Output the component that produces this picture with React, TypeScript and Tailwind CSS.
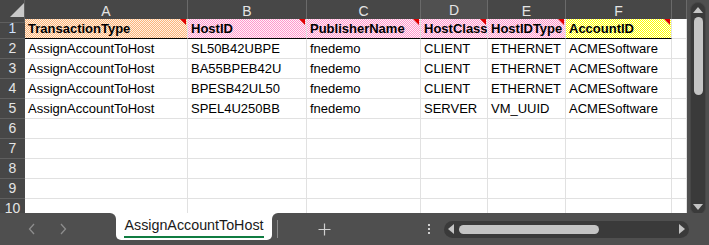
import React from 'react';

type Fill = 'orange' | 'pink' | 'yellow';

const columns = ['A', 'B', 'C', 'D', 'E', 'F', ''];

const headers: { label: string; fill: Fill }[] = [
  { label: 'TransactionType', fill: 'orange' },
  { label: 'HostID', fill: 'pink' },
  { label: 'PublisherName', fill: 'pink' },
  { label: 'HostClass', fill: 'pink' },
  { label: 'HostIDType', fill: 'pink' },
  { label: 'AccountID', fill: 'yellow' },
];

const rows: string[][] = [
  ['AssignAccountToHost', 'SL50B42UBPE', 'fnedemo', 'CLIENT', 'ETHERNET', 'ACMESoftware'],
  ['AssignAccountToHost', 'BA55BPEB42U', 'fnedemo', 'CLIENT', 'ETHERNET', 'ACMESoftware'],
  ['AssignAccountToHost', 'BPESB42UL50', 'fnedemo', 'CLIENT', 'ETHERNET', 'ACMESoftware'],
  ['AssignAccountToHost', 'SPEL4U250BB', 'fnedemo', 'SERVER', 'VM_UUID', 'ACMESoftware'],
];

// checkered header fills (Excel pattern fill), 2px tiles
const fillClass: Record<Fill, string> = {
  orange: 'bg-[#fdd3ae] bg-[conic-gradient(#fcb57a_25%,#fff0e2_0_50%,#fcb57a_0_75%,#fff0e2_0)] bg-size-[2px_2px]',
  pink: 'bg-[#ffc6e2] bg-[conic-gradient(#ff99cc_25%,#fff0f7_0_50%,#ff99cc_0_75%,#fff0f7_0)] bg-size-[2px_2px]',
  yellow: 'bg-[#ffff80] bg-[conic-gradient(#ffff00_25%,#fffff4_0_50%,#ffff00_0_75%,#fffff4_0)] bg-size-[2px_2px]',
};

const gridCols = 'grid grid-cols-[25px_163px_119px_114px_67px_78px_106px_15px]';

const RowNumber: React.FC<{ n: number; active?: boolean }> = ({ n, active }) => (
  <div
    className={`h-5 flex items-center justify-center border-b border-[#5f5f5f] bg-[#474747] text-[14px] ${
      active ? 'text-[#cfe3ff]' : 'text-[#e4e4e4]'
    }`}
  >
    {n}
  </div>
);

const Cell: React.FC<{ children?: React.ReactNode }> = ({ children }) => (
  <div className="h-5 flex items-center pl-[3px] border-r border-b border-[#e1e1e1] bg-white text-[13px] text-black whitespace-nowrap overflow-hidden">
    {children}
  </div>
);

const App: React.FC = () => {
  return (
    <div className="w-[709px] h-[245px] flex flex-col bg-[#4f4f4f] overflow-hidden font-['Liberation_Sans',Arial,sans-serif]">
      {/* sheet + vertical scrollbar */}
      <div className="h-[213px] flex">
        <div className="w-[687px] h-[213px] overflow-hidden bg-white">
          {/* column letters */}
          <div className={`${gridCols} h-[19px] bg-[#474747]`}>
            <div className="relative border-r border-b border-[#5f5f5f]">
              <div className="absolute left-[10px] top-[3px] w-[14px] h-[14px] bg-[#c8c8c8] [clip-path:polygon(100%_0,100%_100%,0_100%)]" />
            </div>
            {columns.map((c, i) => (
              <div
                key={i}
                className={`flex items-center justify-center text-[14px] text-[#e4e4e4] border-r border-[#6a6a6a] ${
                  c === 'D' ? 'border-b-2 border-b-[#21a366] bg-[#505050]' : 'border-b border-b-[#5f5f5f]'
                }`}
              >
                {c}
              </div>
            ))}
          </div>

          {/* header row */}
          <div className={gridCols}>
            <RowNumber n={1} active />
            {headers.map((h) => (
              <div
                key={h.label}
                className={`relative h-5 flex items-center pl-[3px] border-r border-[#e1e1e1] border-b border-b-black whitespace-nowrap overflow-hidden ${fillClass[h.fill]}`}
              >
                <span className="relative text-[13px] font-bold text-[#000000]">{h.label}</span>
                <div className="absolute right-[1px] top-0 w-0 h-0 border-t-[6px] border-l-[6px] border-t-[#e00000] border-l-transparent" />
              </div>
            ))}
            <Cell />
          </div>

          {/* data rows */}
          {rows.map((r, i) => (
            <div key={i} className={gridCols}>
              <RowNumber n={i + 2} />
              {r.map((v, j) => (
                <Cell key={j}>{v}</Cell>
              ))}
              <Cell />
            </div>
          ))}

          {/* empty rows */}
          {[6, 7, 8, 9, 10].map((n) => (
            <div key={n} className={gridCols}>
              <RowNumber n={n} />
              {columns.map((_, j) => (
                <Cell key={j} />
              ))}
            </div>
          ))}
        </div>

        {/* vertical scrollbar */}
        <div className="flex-1 pl-[3px] pr-[3px] pt-[2px]">
          <div className="w-[16px] h-[213px] rounded-full bg-[#3a3a3a] border border-[#474747] flex flex-col items-center py-[4px]">
            <div className="w-0 h-0 border-l-[5px] border-r-[5px] border-b-[6px] border-l-transparent border-r-transparent border-b-[#c4c4c4]" />
            <div className="mt-[4px] w-[9px] h-[78px] rounded-full bg-[#c4c4c4]" />
            <div className="flex-1" />
            <div className="w-0 h-0 border-l-[5px] border-r-[5px] border-t-[6px] border-l-transparent border-r-transparent border-t-[#c4c4c4]" />
          </div>
        </div>
      </div>

      {/* sheet tab bar */}
      <div className="flex-1 flex bg-white">
        <div className="w-[116px] bg-[#4f4f4f] rounded-tr-[6px] flex items-center pl-[27px] gap-[21px] text-[#8d8d8d]">
          <svg width="10" height="14" viewBox="0 0 10 14" fill="none" stroke="currentColor" strokeWidth="1.3">
            <path d="M7 2 L2.5 7 L7 12" />
          </svg>
          <svg width="10" height="14" viewBox="0 0 10 14" fill="none" stroke="currentColor" strokeWidth="1.3">
            <path d="M3 2 L7.5 7 L3 12" />
          </svg>
        </div>
        <div className="bg-[#4f4f4f]">
          <div className="w-[156px] h-[27px] bg-white rounded-b-[5px] flex flex-col items-center pt-[3px]">
            <span className="text-[14.3px] text-[#1a1a1a] leading-[18px]">AssignAccountToHost</span>
            <div className="mt-[2px] w-[140px] h-[2px] bg-[#107c41]" />
          </div>
        </div>
        <div className="flex-1 bg-[#4f4f4f] rounded-tl-[6px] flex items-center">
          <div className="ml-[5px] w-px h-[18px] bg-[#8a8a8a]" />
          <svg className="ml-[40px]" width="13" height="13" viewBox="0 0 13 13" stroke="#d0d0d0" strokeWidth="1.2">
            <path d="M6.5 0.5 V12.5 M0.5 6.5 H12.5" />
          </svg>
          <div className="ml-[97px] flex flex-col gap-[2px]">
            <div className="w-[2px] h-[2px] bg-[#d0d0d0]" />
            <div className="w-[2px] h-[2px] bg-[#d0d0d0]" />
            <div className="w-[2px] h-[2px] bg-[#d0d0d0]" />
          </div>
          <div className="ml-[14px] w-[245px] h-[17px] rounded-full bg-[#3a3a3a] flex items-center px-[4px]">
            <div className="w-0 h-0 border-t-[5px] border-b-[5px] border-r-[6px] border-t-transparent border-b-transparent border-r-[#c4c4c4]" />
            <div className="ml-[5px] w-[140px] h-[9px] rounded-full bg-[#c4c4c4]" />
            <div className="flex-1" />
            <div className="w-0 h-0 border-t-[5px] border-b-[5px] border-l-[6px] border-t-transparent border-b-transparent border-l-[#c4c4c4]" />
          </div>
        </div>
      </div>
    </div>
  );
};

export default App;
